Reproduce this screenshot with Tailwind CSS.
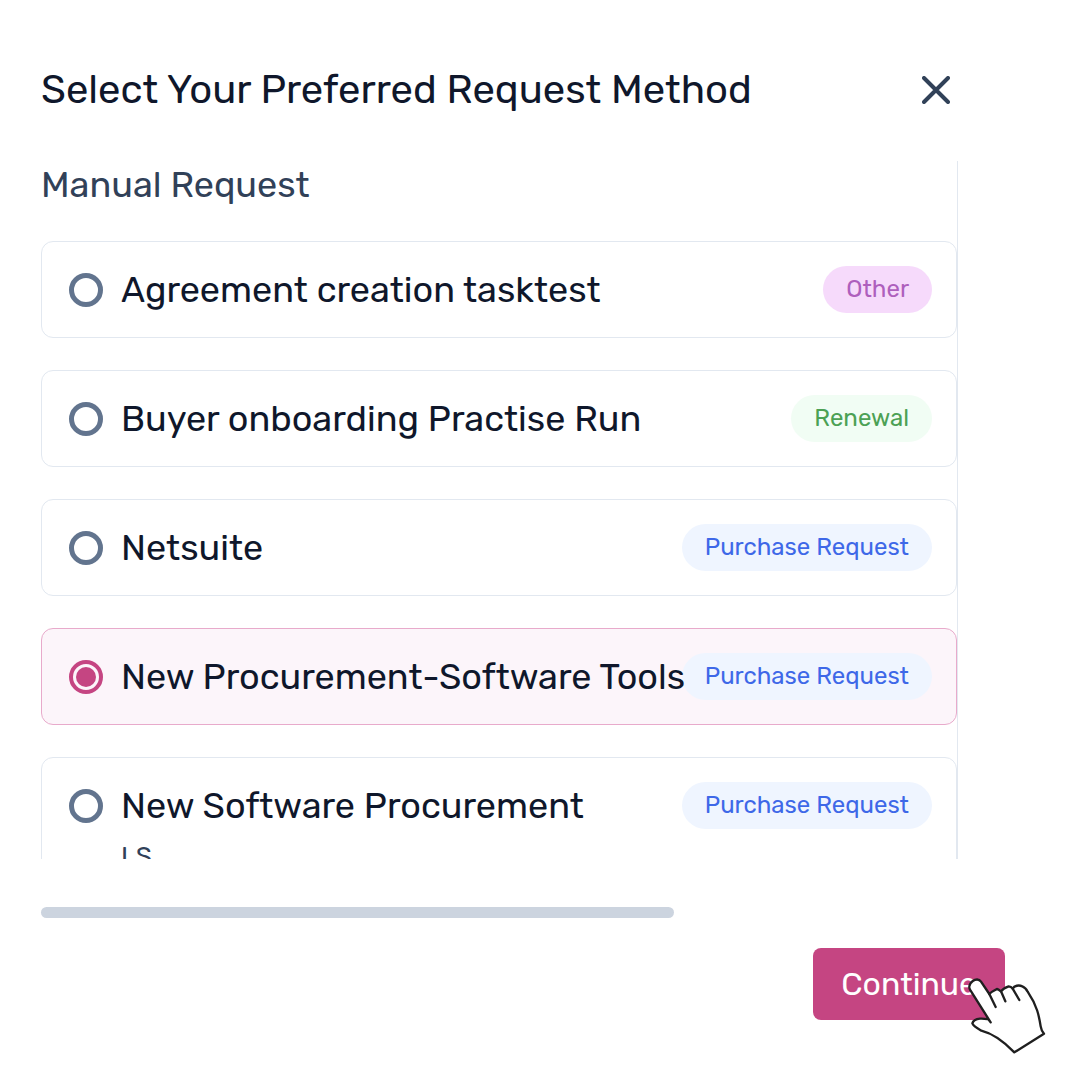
<!DOCTYPE html>
<html lang="en">
<head>
  <meta charset="UTF-8" />
  <meta name="viewport" content="width=device-width, initial-scale=1.0" />
  <title>Select Request Method</title>
  <script src="https://cdn.jsdelivr.net/npm/@tailwindcss/browser@4"></script>
</head>
<body class="bg-white text-slate-900 font-['Rubik','Roboto',sans-serif]">

<main class="pl-[41px] pr-[75px] pt-16 pb-12">
  <header class="flex items-center justify-between pr-[47px]">
    <h1 class="text-[40px] leading-[52px] whitespace-nowrap">Select Your Preferred Request Method</h1>
    <button type="button" aria-label="Close" class="mr-2 text-slate-700">
      <svg class="size-7" viewBox="0 0 28 28" fill="none" stroke="currentColor" stroke-width="4" stroke-linecap="round">
        <path d="M2 2L26 26M26 2L2 26" />
      </svg>
    </button>
  </header>

  <form>
    <!-- Scrollable list of workflows -->
    <div role="radiogroup" aria-labelledby="groupTitle" class="mt-[45px] mr-[47px] h-[698px] overflow-y-auto [scrollbar-width:none] border-r border-slate-200">
      <h2 id="groupTitle" class="text-4xl leading-12 text-slate-700">Manual Request</h2>

      <div class="mt-8 space-y-8">
        <label class="block rounded-xl border border-slate-200 py-6 pl-[27px] pr-6 has-checked:border-[#e8aacb] has-checked:bg-[#fcf5fa]">
          <span class="flex items-center">
            <input type="radio" name="method" class="size-[34px] shrink-0 appearance-none rounded-full border-5 border-slate-500 bg-white checked:border-4 checked:border-[#c54582] checked:bg-[#c54582] checked:bg-clip-content checked:p-[3px]" />
            <span class="relative ml-[18px] min-w-0 flex-1 text-4xl leading-[47px] whitespace-nowrap">Agreement creation tasktest</span>
            <span class="rounded-full bg-[#f6dafb] px-[23px] text-2xl leading-[47px] text-[#ae5fbd]">Other</span>
          </span>
        </label>

        <label class="block rounded-xl border border-slate-200 py-6 pl-[27px] pr-6 has-checked:border-[#e8aacb] has-checked:bg-[#fcf5fa]">
          <span class="flex items-center">
            <input type="radio" name="method" class="size-[34px] shrink-0 appearance-none rounded-full border-5 border-slate-500 bg-white checked:border-4 checked:border-[#c54582] checked:bg-[#c54582] checked:bg-clip-content checked:p-[3px]" />
            <span class="relative ml-[18px] min-w-0 flex-1 text-4xl leading-[47px] whitespace-nowrap">Buyer onboarding Practise Run</span>
            <span class="rounded-full bg-[#f1fdf4] px-[23px] text-2xl leading-[47px] text-[#4ca154]">Renewal</span>
          </span>
        </label>

        <label class="block rounded-xl border border-slate-200 py-6 pl-[27px] pr-6 has-checked:border-[#e8aacb] has-checked:bg-[#fcf5fa]">
          <span class="flex items-center">
            <input type="radio" name="method" class="size-[34px] shrink-0 appearance-none rounded-full border-5 border-slate-500 bg-white checked:border-4 checked:border-[#c54582] checked:bg-[#c54582] checked:bg-clip-content checked:p-[3px]" />
            <span class="relative ml-[18px] min-w-0 flex-1 text-4xl leading-[47px] whitespace-nowrap">Netsuite</span>
            <span class="rounded-full bg-[#eff5ff] px-[23px] text-2xl leading-[47px] whitespace-nowrap text-[#3e68e8]">Purchase Request</span>
          </span>
        </label>

        <label class="block rounded-xl border border-slate-200 py-6 pl-[27px] pr-6 has-checked:border-[#e8aacb] has-checked:bg-[#fcf5fa]">
          <span class="flex items-center">
            <input type="radio" name="method" checked class="size-[34px] shrink-0 appearance-none rounded-full border-5 border-slate-500 bg-white checked:border-4 checked:border-[#c54582] checked:bg-[#c54582] checked:bg-clip-content checked:p-[3px]" />
            <span class="relative ml-[18px] min-w-0 flex-1 text-4xl leading-[47px] whitespace-nowrap">New Procurement-Software Tools</span>
            <span class="rounded-full bg-[#eff5ff] px-[23px] text-2xl leading-[47px] whitespace-nowrap text-[#3e68e8]">Purchase Request</span>
          </span>
        </label>

        <label class="block rounded-xl border border-slate-200 py-6 pl-[27px] pr-6 has-checked:border-[#e8aacb] has-checked:bg-[#fcf5fa]">
          <span class="flex items-center">
            <input type="radio" name="method" class="size-[34px] shrink-0 appearance-none rounded-full border-5 border-slate-500 bg-white checked:border-4 checked:border-[#c54582] checked:bg-[#c54582] checked:bg-clip-content checked:p-[3px]" />
            <span class="relative ml-[18px] min-w-0 flex-1 text-4xl leading-[47px] whitespace-nowrap">New Software Procurement</span>
            <span class="rounded-full bg-[#eff5ff] px-[23px] text-2xl leading-[47px] whitespace-nowrap text-[#3e68e8]">Purchase Request</span>
          </span>
          <span class="mt-[10px] ml-[52px] block text-[26px] leading-9 text-slate-700">LS</span>
        </label>
      </div>
    </div>

    <!-- Horizontal scroll position -->
    <div class="mt-12 mr-[47px]">
      <div class="h-[11px] w-[69%] rounded-full bg-[#ccd4df]"></div>
    </div>

    <div class="mt-[30px] flex justify-end">
      <div class="relative">
        <button type="button" class="rounded-lg bg-[#c54582] px-7 text-[32px] leading-[72px] text-white">Continue</button>
        <svg class="absolute -right-[42px] top-7 size-20" viewBox="500 140 240 240" fill="none" stroke="#1f1f1f" stroke-width="7" stroke-linejoin="round" stroke-linecap="round">
          <path fill="#fff" d="M571 279L509 181C499 162 530 139 542 157L567 194C573 187 584 183 590 179C596 180 600 185 602 186C608 178 616 174 625 171C631 171 635 175 637 178C642 169 655 166 666 171C674 174 679 181 682 187C711 230 716 260 721 291Q723 304 731 313L642 369C607 333 575 312 543 304C530 297 518 290 516 282C519 272 529 269 539 268C550 267 558 269 564 270Z" />
          <path d="M567 194L586 233M602 186L615 216M637 178L657 212" />
        </svg>
      </div>
    </div>
  </form>
</main>

</body>
</html>
